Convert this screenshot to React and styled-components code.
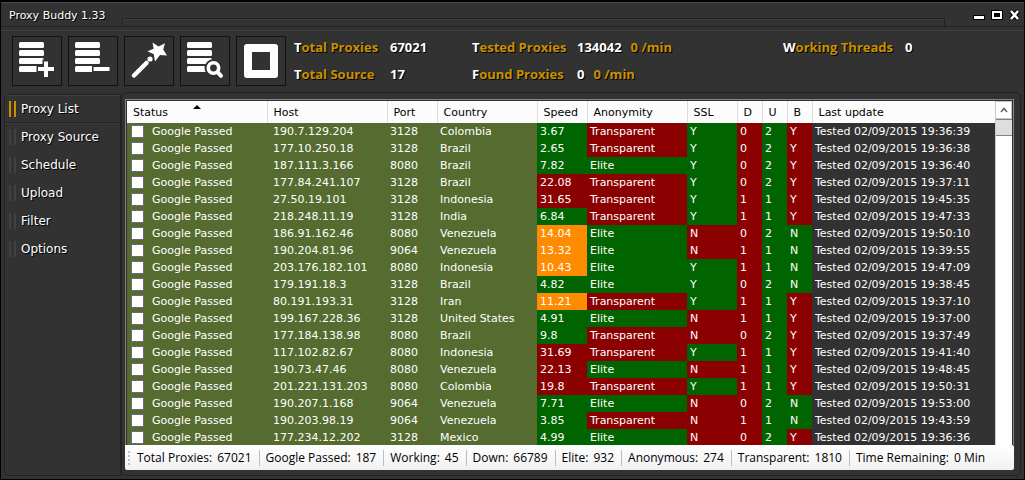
import React, { useState } from 'react';
import styled, { createGlobalStyle, css } from 'styled-components';

const ui = '"DejaVu Sans", Verdana, sans-serif';
const humanist = '"Open Sans", "Segoe UI", sans-serif';

const color = {
  base: '#323232',
  dark: '#232323',
  light: '#3e3e3e',
  olive: '#556b2f',
  green: '#006400',
  red: '#8b0000',
  orange: '#ff8c00',
  amber: '#c99000',
};

const GlobalStyle = createGlobalStyle`
  *, *::before, *::after { box-sizing: border-box; }
  body { margin: 0; background: #323232; }
  button { font: inherit; color: inherit; padding: 0; margin: 0; border: 0; background: none; }
`;

const Window = styled.div`
  display: flex;
  flex-direction: column;
  height: 100vh;
  border: 1px solid #000;
  border-top-width: 2px;
  background: ${color.base};
  color: #fff;
  font: 11px/16px ${ui};
`;

const TitleBar = styled.header`
  display: flex;
  align-items: flex-end;
  height: 25px;
  padding: 0 3px 0 8px;
  border-top: 1px solid #484848;
  border-bottom: 1px solid ${color.dark};
`;

const Title = styled.h1`
  flex: 0 0 113px;
  margin: 0;
  padding-bottom: 2px;
  font: 11px/17px ${ui};
  white-space: nowrap;
  text-shadow: 1px 1px 0 #000;
`;

const Groove = styled.div`
  flex: 1;
  height: 8px;
  border: 1px solid ${color.dark};
  border-bottom: 0;
  box-shadow: inset 1px 1px 0 #3c3c3c;
`;

const WindowControls = styled.div`
  display: flex;
  gap: 6px;
  padding: 0 0 5px 28px;
`;

const ControlButton = styled.button`
  width: 12px;
  height: 12px;
  svg { display: block; }
`;

const Toolbar = styled.div`
  display: flex;
  align-items: flex-start;
  margin-top: 3px;
  padding: 5px 11px 2px;
  border-top: 1px solid ${color.light};
`;

const ToolGroup = styled.div`
  display: flex;
  gap: 6px;
`;

const ToolButton = styled.button`
  width: 50px;
  height: 50px;
  border: 1px solid #121212;
  svg { display: block; }
`;

const Stats = styled.dl`
  flex: 1;
  display: grid;
  grid-template-columns: 96px 82px 105px 206px 122px 1fr;
  grid-auto-rows: 27px;
  margin: 0 0 0 8px;
  font: bold 13px/22px ${humanist};
  text-shadow: 1px 1px 0 #000;
  white-space: nowrap;
`;

const StatLabel = styled.dt`
  color: ${color.amber};
  &::first-letter { color: #fff; }
`;

const StatValue = styled.dd`
  margin: 0;
`;

const Rate = styled.span`
  margin-left: 9px;
  color: ${color.amber};
`;

const Body = styled.div`
  flex: 1;
  min-height: 0;
  display: flex;
  padding: 0 3px 3px;
`;

const Sidebar = styled.nav`
  flex: 0 0 117px;
  display: flex;
  flex-direction: column;
  margin-top: 2px;
  border: 1px solid ${color.dark};
  border-radius: 4px 0 0 4px;
  background: ${color.base};
`;

const NavItem = styled.a`
  display: flex;
  align-items: center;
  gap: 5px;
  height: 28px;
  padding-left: 4px;
  border-bottom: 1px solid transparent;
  color: #fff;
  font: 12px/16px ${ui};
  text-decoration: none;
  text-shadow: 1px 1px 0 #000;
  white-space: nowrap;
  ${(p) => p.$active && css`
    border-bottom-color: ${color.dark};
    box-shadow: 0 1px 0 #3a3a3a, inset 0 1px 0 #3e3e3e;
  `}
  &::before {
    content: '';
    width: 7px;
    height: 16px;
    border: solid ${(p) => (p.$active ? color.amber : '#414141')};
    border-width: 0 2px;
  }
`;

const Page = styled.main`
  flex: 1;
  min-width: 0;
  display: flex;
  flex-direction: column;
  padding: 6px 6px 5px 3px;
  border: 1px solid ${color.dark};
  border-radius: 5px;
`;

const List = styled.div`
  flex: 1;
  min-height: 0;
  display: flex;
  overflow: hidden;
  border: 1px solid #82828a;
  border-bottom: 0;
  padding: 1px 1px 0;
`;

const TableArea = styled.div`
  flex: 1;
  min-width: 0;
  overflow: hidden;
`;

const Table = styled.table`
  width: 100%;
  table-layout: fixed;
  border-collapse: collapse;
  border-spacing: 0;
`;

const HeadCell = styled.th`
  position: relative;
  width: ${(p) => (p.$width ? `${p.$width}px` : 'auto')};
  height: 22px;
  padding: 0 0 0 6px;
  border-right: ${(p) => (p.$last ? 0 : 1)}px solid #dcdcdc;
  background: #fcfcfc;
  color: #000;
  font: 11px/21px ${ui};
  text-align: left;
  white-space: nowrap;
`;

const SortMark = styled.span`
  position: absolute;
  top: 4px;
  left: 50%;
  margin-left: -4px;
  border: 4px solid transparent;
  border-top: 0;
  border-bottom-color: #000;
`;

const Cell = styled.td`
  height: 17px;
  padding: 0 0 0 3px;
  background: ${(p) => p.$fill};
  font: 11px/17px ${ui};
  white-space: nowrap;
`;

const HostCell = styled(Cell)`
  padding-left: 6px;
`;

const RowLabel = styled.label`
  display: flex;
  align-items: center;
  gap: 8px;
  height: 17px;
  padding-left: 1px;
`;

const Check = styled.input`
  appearance: none;
  width: 13px;
  height: 13px;
  margin: 0;
  border: 1px solid #6b6b78;
  background: #fff;
  &:checked { background: #3b6ea5; }
`;

const ScrollTrack = styled.div`
  flex: 0 0 17px;
  background: #fff;
  border-left: 1px solid #c8c8c8;
`;

const ScrollButton = styled.button`
  display: block;
  width: 100%;
  height: 18px;
  border: 1px solid #c4c4c4;
  border-left: 0;
  svg { display: block; margin: auto; }
`;

const ScrollThumb = styled.div`
  height: 17px;
  background: #dededc;
  border-top: 1px solid #82828a;
  border-bottom: 1px solid #82828a;
`;

const StatusBar = styled.footer`
  flex: 0 0 25px;
  display: flex;
  align-items: center;
  padding-left: 3px;
  overflow: hidden;
  border-radius: 0 2px 2px 2px;
  background: linear-gradient(#fff, #f1f1f1);
  color: #000;
  font: 12px/16px ${humanist};
  white-space: nowrap;
`;

const Grip = styled.span`
  width: 2px;
  height: 14px;
  margin-right: 7px;
  background: repeating-linear-gradient(#c0c0c0 0 2px, transparent 2px 4px);
`;

const StatusItem = styled.span`
  display: flex;
  gap: 5px;
  padding-right: 7px;
  & + & {
    padding-left: 6px;
    border-left: 1px solid #bdbdbd;
  }
`;

const Stack = () => (
  <g fill="#fff">
    {[5, 13, 21, 29].map((y) => (
      <rect key={y} x="6" y={y} width="25" height="6" rx="1.5" />
    ))}
  </g>
);

const icons = {
  add: (
    <>
      <Stack />
      <path d="M33 22.5v19M23.5 32h19" stroke={color.base} strokeWidth="7" />
      <path d="M33 24.5v15.5M25 32h16" stroke="#fff" strokeWidth="4" />
    </>
  ),
  remove: (
    <>
      <Stack />
      <path d="M23 32h20" stroke={color.base} strokeWidth="7" />
      <path d="M24.5 32h16" stroke="#fff" strokeWidth="4" />
    </>
  ),
  wand: (
    <>
      <path d="M9 38.5L21.5 26" stroke="#fff" strokeWidth="4.5" strokeLinecap="round" />
      <circle cx="25" cy="22" r="2.6" fill="#fff" />
      <path
        d="M27.5 5.5L33.5 9.5L40 6.2L38.2 12.6L42 18.5L35 18L30 24.5L28.8 17.2L22.5 14.2L28.6 11.8Z"
        fill="#fff"
      />
    </>
  ),
  search: (
    <>
      <Stack />
      <circle cx="32.5" cy="31" r="9" fill={color.base} />
      <circle cx="32.5" cy="31" r="5.2" fill="none" stroke="#fff" strokeWidth="3.6" />
      <path d="M36.5 35L40 38.8" stroke="#fff" strokeWidth="4" strokeLinecap="round" />
    </>
  ),
  stop: <path d="M10 7h28q3 0 3 3v28q0 3-3 3h-28q-3 0-3-3v-28q0-3 3-3zM15 15v18h18v-18z" fill="#fff" fillRule="evenodd" />,
};

const tools = [
  ['add', 'Add proxies'],
  ['remove', 'Remove proxies'],
  ['wand', 'Auto'],
  ['search', 'Find proxies'],
  ['stop', 'Stop'],
];

const pages = ['Proxy List', 'Proxy Source', 'Schedule', 'Upload', 'Filter', 'Options'];

const columns = [
  ['Status', 140],
  ['Host', 120],
  ['Port', 50],
  ['Country', 100],
  ['Speed', 50],
  ['Anonymity', 100],
  ['SSL', 50],
  ['D', 25],
  ['U', 25],
  ['B', 25],
  ['Last update', 0],
];

const T = 'Transparent';
const E = 'Elite';
const proxies = [
  ['190.7.129.204', 3128, 'Colombia', '3.67', T, 'Y', 0, 2, 'Y', '19:36:39'],
  ['177.10.250.18', 3128, 'Brazil', '2.65', T, 'Y', 0, 2, 'Y', '19:36:38'],
  ['187.111.3.166', 8080, 'Brazil', '7.82', E, 'Y', 0, 2, 'Y', '19:36:40'],
  ['177.84.241.107', 3128, 'Brazil', '22.08', T, 'Y', 0, 2, 'Y', '19:37:11'],
  ['27.50.19.101', 3128, 'Indonesia', '31.65', T, 'Y', 1, 1, 'Y', '19:45:35'],
  ['218.248.11.19', 3128, 'India', '6.84', T, 'Y', 1, 1, 'Y', '19:47:33'],
  ['186.91.162.46', 8080, 'Venezuela', '14.04', E, 'N', 0, 2, 'N', '19:50:10'],
  ['190.204.81.96', 9064, 'Venezuela', '13.32', E, 'N', 1, 1, 'N', '19:39:55'],
  ['203.176.182.101', 8080, 'Indonesia', '10.43', E, 'Y', 1, 1, 'N', '19:47:09'],
  ['179.191.18.3', 3128, 'Brazil', '4.82', E, 'Y', 0, 2, 'N', '19:38:45'],
  ['80.191.193.31', 3128, 'Iran', '11.21', T, 'Y', 1, 1, 'Y', '19:37:10'],
  ['199.167.228.36', 3128, 'United States', '4.91', E, 'N', 1, 1, 'Y', '19:37:00'],
  ['177.184.138.98', 8080, 'Brazil', '9.8', T, 'N', 0, 2, 'Y', '19:37:49'],
  ['117.102.82.67', 8080, 'Indonesia', '31.69', T, 'Y', 1, 1, 'Y', '19:41:40'],
  ['190.73.47.46', 8080, 'Venezuela', '22.13', E, 'N', 1, 1, 'Y', '19:48:45'],
  ['201.221.131.203', 8080, 'Colombia', '19.8', T, 'Y', 1, 1, 'Y', '19:50:31'],
  ['190.207.1.168', 9064, 'Venezuela', '7.71', E, 'N', 0, 2, 'N', '19:53:00'],
  ['190.203.98.19', 9064, 'Venezuela', '3.85', T, 'N', 1, 1, 'N', '19:43:59'],
  ['177.234.12.202', 3128, 'Mexico', '4.99', E, 'N', 0, 2, 'Y', '19:36:36'],
];

const totals = [
  ['Total Proxies', '67021'],
  ['Google Passed', '187'],
  ['Working', '45'],
  ['Down', '66789'],
  ['Elite', '932'],
  ['Anonymous', '274'],
  ['Transparent', '1810'],
  ['Time Remaining', '0 Min'],
];

const speedFill = (speed) => (speed < 10 ? color.green : speed < 15 ? color.orange : color.red);

function ProxyRow({ proxy }) {
  const [host, port, country, speed, anonymity, ssl, d, u, b, time] = proxy;
  return (
    <tr>
      <Cell $fill={color.olive}>
        <RowLabel>
          <Check type="checkbox" />
          Google Passed
        </RowLabel>
      </Cell>
      <HostCell $fill={color.olive}>{host}</HostCell>
      <Cell $fill={color.olive}>{port}</Cell>
      <Cell $fill={color.olive}>{country}</Cell>
      <Cell $fill={speedFill(Number(speed))}>{speed}</Cell>
      <Cell $fill={anonymity === E ? color.green : color.red}>{anonymity}</Cell>
      <Cell $fill={ssl === 'Y' ? color.green : color.red}>{ssl}</Cell>
      <Cell $fill={color.red}>{d}</Cell>
      <Cell $fill={color.green}>{u}</Cell>
      <Cell $fill={b === 'N' ? color.green : color.red}>{b}</Cell>
      <Cell $fill={color.base}>Tested 02/09/2015 {time}</Cell>
    </tr>
  );
}

export default function App() {
  const [active, setActive] = useState('Proxy List');
  return (
    <>
      <GlobalStyle />
      <Window>
        <TitleBar>
          <Title>Proxy Buddy 1.33</Title>
          <Groove />
          <WindowControls>
            <ControlButton aria-label="Minimize">
              <svg width="12" height="12"><path d="M0 6h12v5H0z" fill="#000" /><path d="M1 7h10v3H1z" fill="#fff" /></svg>
            </ControlButton>
            <ControlButton aria-label="Maximize">
              <svg width="12" height="12"><path d="M0 1h12v10H0z" fill="#000" /><path d="M2 3h8v6H2z" fill="none" stroke="#fff" strokeWidth="2" /></svg>
            </ControlButton>
            <ControlButton aria-label="Close">
              <svg width="12" height="12"><path d="M2 2l7 8M9 2l-7 8" stroke="#000" strokeWidth="4.5" /><path d="M2 2l7 8M9 2l-7 8" stroke="#fff" strokeWidth="2.5" /></svg>
            </ControlButton>
          </WindowControls>
        </TitleBar>
        <Toolbar>
          <ToolGroup>
            {tools.map(([id, label]) => (
              <ToolButton key={id} aria-label={label}>
                <svg width="48" height="48" fill="none">{icons[id]}</svg>
              </ToolButton>
            ))}
          </ToolGroup>
          <Stats>
            <StatLabel>Total Proxies</StatLabel>
            <StatValue>67021</StatValue>
            <StatLabel>Tested Proxies</StatLabel>
            <StatValue>134042<Rate>0 /min</Rate></StatValue>
            <StatLabel>Working Threads</StatLabel>
            <StatValue>0</StatValue>
            <StatLabel>Total Source</StatLabel>
            <StatValue>17</StatValue>
            <StatLabel>Found Proxies</StatLabel>
            <StatValue>0<Rate>0 /min</Rate></StatValue>
          </Stats>
        </Toolbar>
        <Body>
          <Sidebar>
            {pages.map((name) => (
              <NavItem key={name} href="#" $active={name === active} onClick={() => setActive(name)}>
                {name}
              </NavItem>
            ))}
          </Sidebar>
          <Page>
            <List>
              <TableArea>
                <Table>
                  <thead>
                    <tr>
                      {columns.map(([name, width]) => (
                        <HeadCell key={name} $width={width} $last={!width}>
                          {name}
                          {name === 'Status' && <SortMark />}
                        </HeadCell>
                      ))}
                    </tr>
                  </thead>
                  <tbody>
                    {proxies.map((proxy) => (
                      <ProxyRow key={proxy[0]} proxy={proxy} />
                    ))}
                  </tbody>
                </Table>
              </TableArea>
              <ScrollTrack>
                <ScrollButton aria-label="Scroll up">
                  <svg width="8" height="6"><path d="M1 5l3-3.5L7 5" fill="none" stroke="#606060" strokeWidth="1.5" /></svg>
                </ScrollButton>
                <ScrollThumb />
              </ScrollTrack>
            </List>
            <StatusBar>
              <Grip />
              {totals.map(([name, value]) => (
                <StatusItem key={name}>
                  <span>{name}:</span>
                  <span>{value}</span>
                </StatusItem>
              ))}
            </StatusBar>
          </Page>
        </Body>
      </Window>
    </>
  );
}
